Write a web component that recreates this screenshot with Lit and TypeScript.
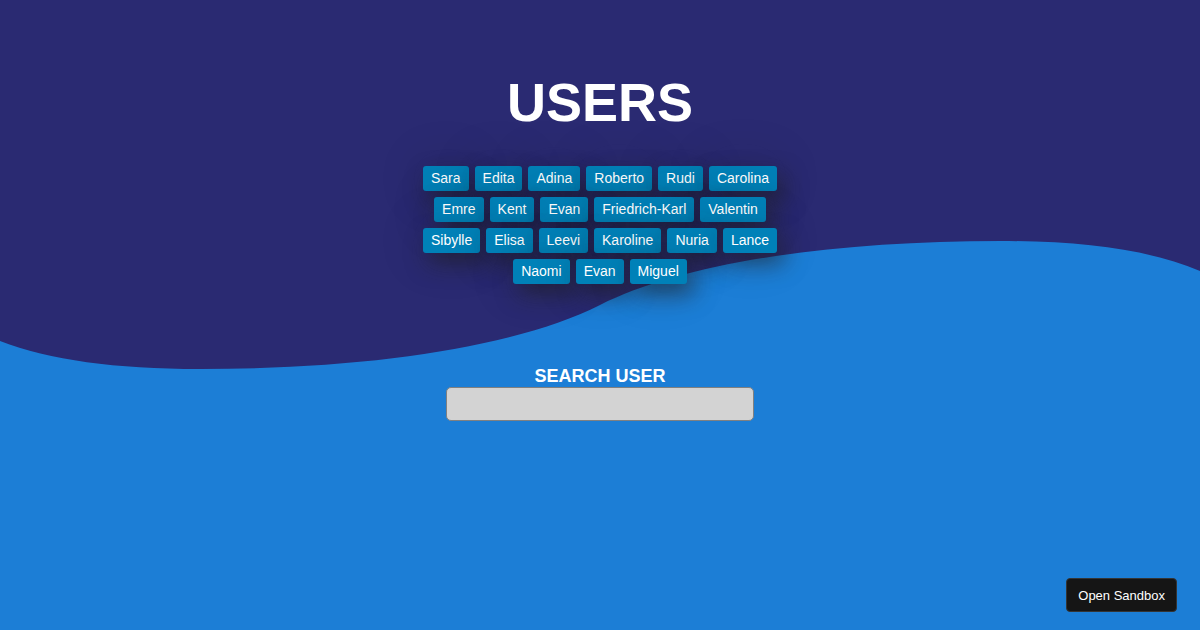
import { LitElement, html, css } from "lit";
import { customElement, property, state } from "lit/decorators.js";

const USERS = [
  "Sara", "Edita", "Adina", "Roberto", "Rudi", "Carolina", "Emre", "Kent",
  "Evan", "Friedrich-Karl", "Valentin", "Sibylle", "Elisa", "Leevi",
  "Karoline", "Nuria", "Lance", "Naomi", "Evan", "Miguel",
];

@customElement("user-list")
export class UserList extends LitElement {
  @property({ attribute: false }) users: string[] = [];

  static styles = css`
    :host {
      display: block;
      width: 100%;
      max-width: 360px;
    }
    .list {
      display: flex;
      flex-wrap: wrap;
      justify-content: center;
      gap: 6px;
      margin: 0;
      padding: 0;
      list-style: none;
    }
    .user {
      padding: 0 8px;
      border-radius: 3px;
      background: #0081b8;
      box-shadow: 6px 10px 22px rgba(34, 34, 34, 0.6), 0 0 50px rgba(34, 34, 34, 0.2);
      font-size: 14px;
      line-height: 25px;
    }
  `;

  render() {
    return html`<ul class="list">
      ${this.users.map((name) => html`<li class="user">${name}</li>`)}
    </ul>`;
  }
}

@customElement("app-root")
export class AppRoot extends LitElement {
  @state() private query = "";

  static styles = css`
    :host {
      display: block;
      color: #fff;
      font-family: "Liberation Sans", Arial, sans-serif;
    }
    .page {
      display: grid;
      min-height: 100vh;
      background: #1c7ed6;
    }
    .wave,
    .content {
      grid-area: 1 / 1;
    }
    .wave {
      display: block;
      width: 100%;
      height: 100vh;
    }
    .content {
      display: flex;
      flex-direction: column;
      align-items: center;
      padding: 70px 16px;
      z-index: 1;
    }
    .title {
      margin: 0 0 32px;
      font-size: 54px;
      line-height: 64px;
    }
    .search {
      display: flex;
      flex-direction: column;
      align-items: center;
      width: 100%;
      max-width: 308px;
      margin-top: 82px;
    }
    .label {
      font-size: 18px;
      font-weight: bold;
      line-height: 21px;
    }
    .input {
      box-sizing: border-box;
      width: 100%;
      height: 34px;
      padding: 4px 8px;
      border: 1px solid #808080;
      border-radius: 5px;
      background: #d3d3d3;
      font: inherit;
      font-size: 16px;
    }
    .sandbox {
      position: fixed;
      right: 23px;
      bottom: 18px;
      z-index: 2;
      height: 34px;
      padding: 0 11px;
      border: 1px solid #343434;
      border-radius: 4px;
      background: #151515;
      color: #fff;
      font: inherit;
      font-size: 13px;
    }
  `;

  private onInput(event: Event) {
    this.query = (event.target as HTMLInputElement).value;
  }

  render() {
    const query = this.query.toLowerCase();
    const users = USERS.filter((name) => name.toLowerCase().includes(query));
    return html`
      <div class="page">
        <svg class="wave" viewBox="0 0 1200 630" preserveAspectRatio="none" aria-hidden="true">
          <path
            fill="#2a2a72"
            d="M0 0V341C50 360 115 369 200 369C370 369 516 347 600 305C684 263 830 241 1000 241C1085 241 1150 250 1200 271V0Z"
          />
        </svg>
        <main class="content">
          <h1 class="title">USERS</h1>
          <user-list .users=${users}></user-list>
          <div class="search">
            <label class="label" for="search">SEARCH USER</label>
            <input class="input" id="search" type="text" .value=${this.query} @input=${this.onInput} />
          </div>
        </main>
        <button class="sandbox" type="button">Open Sandbox</button>
      </div>
    `;
  }
}
